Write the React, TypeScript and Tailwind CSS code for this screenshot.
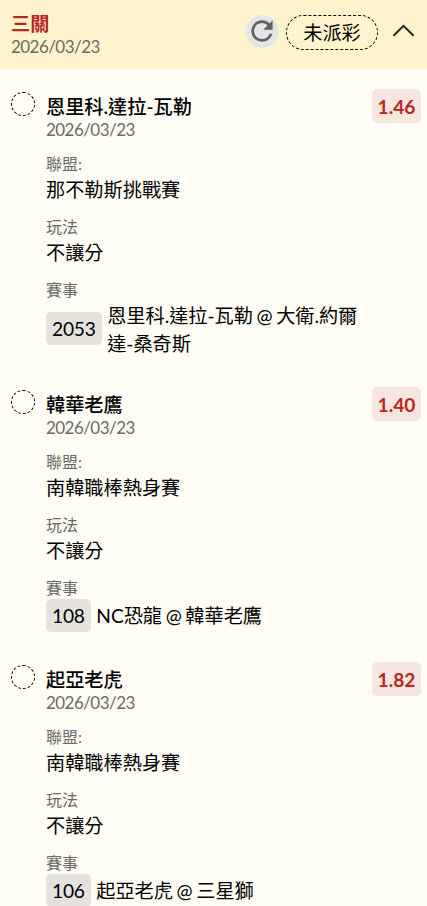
import { MdRefresh } from 'react-icons/md';

type Bet = {
  team: string;
  date: string;
  odds: string;
  league: string;
  play: string;
  code: string;
  match: string;
};

const bets: Bet[] = [
  {
    team: '恩里科.達拉-瓦勒',
    date: '2026/03/23',
    odds: '1.46',
    league: '那不勒斯挑戰賽',
    play: '不讓分',
    code: '2053',
    match: '恩里科.達拉-瓦勒 @ 大衛.約爾達-桑奇斯',
  },
  {
    team: '韓華老鷹',
    date: '2026/03/23',
    odds: '1.40',
    league: '南韓職棒熱身賽',
    play: '不讓分',
    code: '108',
    match: 'NC恐龍 @ 韓華老鷹',
  },
  {
    team: '起亞老虎',
    date: '2026/03/23',
    odds: '1.82',
    league: '南韓職棒熱身賽',
    play: '不讓分',
    code: '106',
    match: '起亞老虎 @ 三星獅',
  },
];

function DateText({ value }: { value: string }) {
  return (
    <div className="h-5 text-[17px] leading-[18px] tracking-[-0.55px] text-[#6b6a66]">{value}</div>
  );
}

function Field({ label, value }: { label: string; value: string }) {
  return (
    <div className="mb-[11px]">
      <div className="h-6 text-base leading-6 text-[#6b6a66]">{label}</div>
      <div className="h-7 text-[19.2px] leading-7">{value}</div>
    </div>
  );
}

function BetItem({ bet }: { bet: Bet }) {
  return (
    <div className="flex items-start pr-1.5 pb-[29px] pl-[11px]">
      <div className="mt-[3px] mr-[11px] h-6 w-6 shrink-0 rounded-full border border-dashed border-black" />
      <div className="min-w-0 flex-1">
        <div className="flex justify-between">
          <div className="mb-[11px]">
            <div className="mt-1 h-7 text-[19.2px] leading-7 font-medium">{bet.team}</div>
            <DateText value={bet.date} />
          </div>
          <div className="h-[34px] w-[49px] rounded-[5px] bg-[#f7e6df] text-center text-[19.2px] leading-[35px] font-bold text-[#b8281e]">
            {bet.odds}
          </div>
        </div>
        <Field label="聯盟:" value={bet.league} />
        <Field label="玩法" value={bet.play} />
        <div className="h-[23px] text-base leading-6 text-[#6b6a66]">賽事</div>
        <div className="flex items-center">
          <div className="-mt-[0.25px] mr-[5.5px] mb-[1.25px] h-[33px] shrink-0 rounded-[5px] bg-[#e5e2dd] px-1.5 text-[19.2px] leading-[34px] tracking-[-0.2px]">
            {bet.code}
          </div>
          <div className="mt-[0.9px] w-[264px] text-[19.2px] leading-7 tracking-[-0.04px] [word-spacing:-1.2px]">
            {bet.match}
          </div>
        </div>
      </div>
    </div>
  );
}

export default function App() {
  return (
    <div className="h-[906px] overflow-hidden bg-[#fffdf4] font-['Lato','Noto_Sans_CJK_TC',sans-serif] text-black">
      <header className="flex h-[69px] items-start bg-[#fff3cd] pr-3 pl-[11px]">
        <div className="flex-1 pt-[10px]">
          <div className="h-7 text-[19.2px] leading-7 font-bold text-[#b8281e]">三關</div>
          <DateText value="2026/03/23" />
        </div>
        <button className="mt-[15px] flex h-[33px] w-[33px] items-center justify-center rounded-full bg-[#e5e5e5] pr-px pb-px text-[#606060]">
          <MdRefresh size={32} />
        </button>
        <div className="mt-[15px] ml-[7px] h-[35px] w-[92px] rounded-full border border-dashed border-black text-center text-[19.2px] leading-[34px]">
          未派彩
        </div>
        <svg className="mt-[23px] ml-[14px]" width="23" height="15" viewBox="0 0 23 15" fill="none">
          <path d="M1.5 12.8 L11.5 2.8 L21.5 12.8" stroke="#222" strokeWidth="2" />
        </svg>
      </header>
      <main className="pt-5">
        {bets.map((bet) => (
          <BetItem key={bet.team} bet={bet} />
        ))}
      </main>
    </div>
  );
}
